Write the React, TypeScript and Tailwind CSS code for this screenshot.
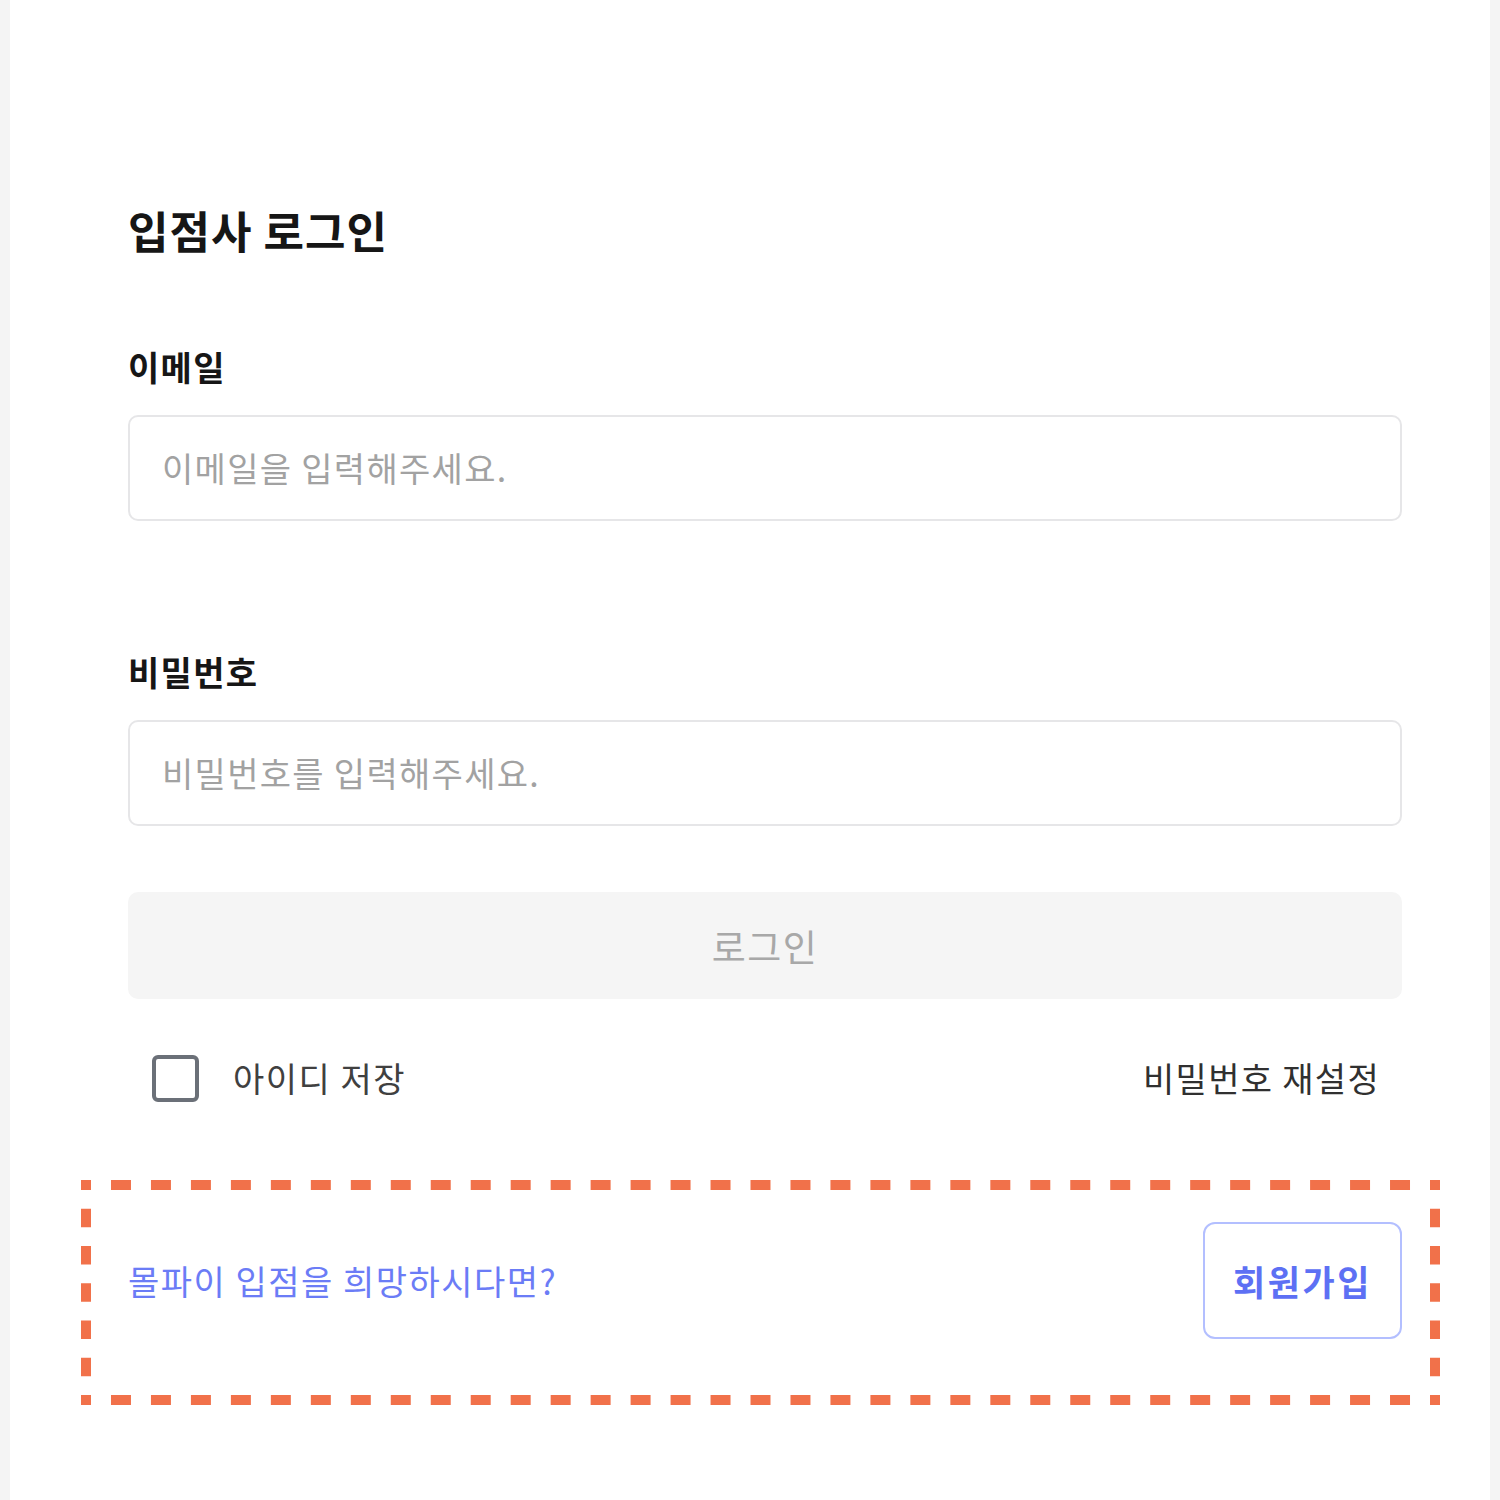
import React from "react";

const font = { fontFamily: '"Noto Sans CJK KR", "Noto Sans", sans-serif' };

function DashedFrame() {
  const W = 1359;
  const H = 225;
  const hSeg = (W - 20) / 67;
  const vSeg = (H - 20) / 11;
  return (
    <svg
      className="pointer-events-none absolute -left-[47px] -top-[42px] h-[225px] w-[1359px]"
      viewBox={`0 0 ${W} ${H}`}
    >
      <g stroke="#f1714a" strokeWidth="10" fill="none">
        <line x1="0" y1="5" x2={W} y2="5" strokeDasharray={`${hSeg} ${hSeg}`} strokeDashoffset={hSeg - 10} />
        <line x1="0" y1={H - 5} x2={W} y2={H - 5} strokeDasharray={`${hSeg} ${hSeg}`} strokeDashoffset={hSeg - 10} />
        <line x1="5" y1="0" x2="5" y2={H} strokeDasharray={`${vSeg} ${vSeg}`} strokeDashoffset={vSeg - 10} />
        <line x1={W - 5} y1="0" x2={W - 5} y2={H} strokeDasharray={`${vSeg} ${vSeg}`} strokeDashoffset={vSeg - 10} />
      </g>
    </svg>
  );
}

export default function App() {
  return (
    <div className="min-h-[1500px] bg-[#f4f4f4] px-[10px]" style={font}>
      <div className="min-h-[1500px] bg-white pl-[118px] pr-[88px] pt-[200px]">
        <h1 className="text-[44px] font-bold leading-[60px] text-[#161616] tracking-[1px]">입점사 로그인</h1>

        <div className="mt-[83px] text-[34px] font-bold leading-[48px] text-[#161616] tracking-[1.3px]">이메일</div>
        <div className="mt-[24px] flex h-[106px] items-center rounded-[10px] border-2 border-[#e6e6e8] px-[32px]">
          <span className="text-[34px] leading-[48px] text-[#a2a2a2] tracking-[1.3px]">이메일을 입력해주세요.</span>
        </div>

        <div className="mt-[127px] text-[34px] font-bold leading-[48px] text-[#161616] tracking-[1.3px]">비밀번호</div>
        <div className="mt-[24px] flex h-[106px] items-center rounded-[10px] border-2 border-[#e6e6e8] px-[32px]">
          <span className="text-[34px] leading-[48px] text-[#a2a2a2] tracking-[1.3px]">비밀번호를 입력해주세요.</span>
        </div>

        <div className="mt-[66px] flex h-[107px] items-center justify-center rounded-[10px] bg-[#f5f5f5]">
          <span className="text-[37px] leading-[48px] text-[#a8a8a8] tracking-[1.5px]">로그인</span>
        </div>

        <div className="mt-[55px] flex h-[48px] items-center justify-between pl-[24px] pr-[22px]">
          <div className="flex items-center gap-[34px]">
            <div className="h-[47px] w-[47px] rounded-[6px] border-[4px] border-[#6b7078]" />
            <span className="text-[34px] leading-[48px] text-[#404040] tracking-[1.5px]">아이디 저장</span>
          </div>
          <span className="text-[34px] leading-[48px] text-[#303030] tracking-[1.3px]">비밀번호 재설정</span>
        </div>

        <div className="relative mt-[120px] flex h-[117px] items-center justify-between">
          <DashedFrame />
          <span className="text-[34px] leading-[48px] text-[#6b7cf6] tracking-[1.5px]">몰파이 입점을 희망하시다면?</span>
          <div className="flex h-[117px] w-[199px] items-center justify-center rounded-[12px] border-2 border-[#b3bfff]">
            <span className="text-[35px] font-bold leading-[48px] text-[#5d70f4] tracking-[2.5px]">회원가입</span>
          </div>
        </div>
      </div>
    </div>
  );
}
